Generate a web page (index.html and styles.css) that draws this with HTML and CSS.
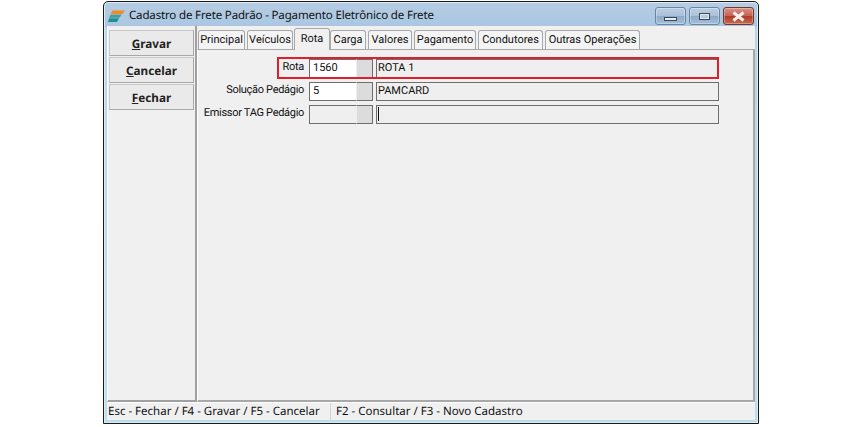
FILE: index.html
```html
<!DOCTYPE html>
<html lang="pt">
<head>
<meta charset="utf-8">
<title>Cadastro de Frete Padrão</title>
<link rel="stylesheet" href="styles.css">
</head>
<body>
<div class="window">
  <header class="titlebar">
    <svg class="logo" width="17" height="13" viewBox="0 0 17 13">
      <path d="M4.5 0.5H17L15 3.2Q14.5 4.2 13 4.2H2.5Z" fill="#f08a24"/>
      <path d="M2.5 4.8H13.5L11.5 7.8H1.2Z" fill="#3f9fa0"/>
      <path d="M1.2 8.3H11L9 12H0Z" fill="#1f8f96"/>
    </svg>
    <span class="title">Cadastro de Frete Padrão - Pagamento Eletrônico de Frete</span>
    <div class="controls">
      <span class="ctl ctl-min"><i></i></span>
      <span class="ctl ctl-max"><i></i></span>
      <span class="ctl ctl-close"><svg width="15" height="11" viewBox="0 0 15 11"><path d="M2.5 1.5L12.5 9.5M12.5 1.5L2.5 9.5" stroke="#f4f0ee" stroke-width="3"/></svg></span>
    </div>
  </header>
  <div class="client">
    <div class="main">
      <aside class="sidebar">
        <button class="btn"><u>G</u>ravar</button>
        <button class="btn"><u>C</u>ancelar</button>
        <button class="btn"><u>F</u>echar</button>
      </aside>
      <section class="tabarea">
        <nav class="tabs">
          <span class="tab tab-1">Principal</span>
          <span class="tab tab-2">Veículos</span>
          <span class="tab tab-3 active">Rota</span>
          <span class="tab tab-4">Carga</span>
          <span class="tab tab-5">Valores</span>
          <span class="tab tab-6">Pagamento</span>
          <span class="tab tab-7">Condutores</span>
          <span class="tab tab-8">Outras Operações</span>
        </nav>
        <div class="panel">
          <div class="row">
            <label class="lbl">Rota</label>
            <span class="code">1560</span><span class="lookup"></span>
            <span class="desc">ROTA 1</span>
          </div>
          <div class="row">
            <label class="lbl">Solução Pedágio</label>
            <span class="code">5</span><span class="lookup"></span>
            <span class="desc">PAMCARD</span>
          </div>
          <div class="row">
            <label class="lbl">Emissor TAG Pedágio</label>
            <span class="code code-off"></span><span class="lookup"></span>
            <span class="desc"><i class="caret"></i></span>
          </div>
          <div class="highlight"></div>
        </div>
      </section>
    </div>
    <footer class="status">
      <span class="st st-a">Esc - Fechar / F4 - Gravar / F5 - Cancelar</span>
      <span class="st">F2 - Consultar / F3 - Novo Cadastro</span>
    </footer>
  </div>
</div>
</body>
</html>
```
FILE: styles.css
```css
* { box-sizing: border-box; }
html, body { margin: 0; padding: 0; background: #fff; }
body {
  width: 862px;
  height: 427px;
  overflow: hidden;
  padding: 1px 0 0 103px;
  font-family: Roboto, "Noto Sans", sans-serif;
  font-size: 11px;
  color: #111;
  text-rendering: geometricPrecision;
}
.window {
  width: 656px;
  height: 423px;
  background: linear-gradient(#b6cde3 0, #a9c6e2 25px, #b8d4ea 26px, #bcdcf0 100%);
  border: 1px solid #1a1a1a;
  border-radius: 5px 5px 0 0;
  padding: 0 3px 3px;
  display: flex;
  flex-direction: column;
  box-shadow: inset 0 0 0 1px #dfeaf3;
}
.titlebar {
  height: 24px;
  flex: none;
  display: flex;
  align-items: center;
  padding-left: 1px;
}
.logo { flex: none; margin-right: 3px; margin-top: 4px; }
.title { font-family: "Noto Sans", sans-serif; font-size: 11.5px; letter-spacing: -.15px; color: #111; margin-left: 1px; margin-top: 3px; white-space: nowrap; }
.controls { margin-left: auto; margin-top: 4px; margin-right: 1px; display: flex; gap: 3px; }
.ctl {
  width: 31px;
  height: 18px;
  display: flex;
  align-items: center;
  justify-content: center;
  border: 1px solid #6d86a0;
  border-radius: 3px;
  background: linear-gradient(#bccfe2, #a9c0d8 50%, #8ea9c6 52%, #a5bfd9);
  box-shadow: inset 0 0 0 1px rgba(255,255,255,.3);
}
.ctl-close { border-color: #6b3a34; background: linear-gradient(#d89488, #c8604f 50%, #b13a2a 52%, #c86a50); }
.ctl-min i { width: 13px; height: 4px; margin-top: 6px; background: #e4ecf3; border: 1px solid #38495c; }
.ctl-max i { width: 11px; height: 7px; background: #b8c9da; border: 1px solid #38495c; box-shadow: inset 0 0 0 1px #e0e8f0; display: block; }
.client {
  flex: 1;
  background: #f0f0f0;
  display: flex;
  flex-direction: column;
}
.main { flex: 1; display: flex; min-height: 0; }
.sidebar {
  width: 90px;
  flex: none;
  border: 1px solid #a0a0a0;
  border-top: 0;
  border-left: 1px solid #fff;
  border-right-width: 2px;
  border-bottom-width: 2px;
  padding: 4px 0 0 1px;
  display: flex;
  flex-direction: column;
  gap: 1px;
}
.btn {
  width: 85px;
  height: 26px;
  padding: 1px 0 0;
  background: #eaeaea;
  border: 1px solid #a8a8a8;
  border-top-color: #c8c8c8;
  border-left-color: #c8c8c8;
  font-family: "Noto Sans", sans-serif;
  font-size: 11.7px;
  font-weight: 700;
  color: #222;
  text-rendering: geometricPrecision;
}
.tabarea { flex: 1; display: flex; flex-direction: column; min-width: 0; }
.tabs { height: 23px; flex: none; display: flex; align-items: flex-end; padding-left: 1px; position: relative; z-index: 1; }
.tab {
  height: 19px;
  border: 1px solid #a8a8a8;
  border-bottom: 0;
  border-radius: 3px 3px 0 0;
  background: #f4f4f4;
  line-height: 18px;
  text-align: center;
  white-space: nowrap;
  margin-right: 2px;
}
.tab-1 { width: 47px; }
.tab-2 { width: 46px; margin-right: 1px; }
.tab-3 { width: 36px; margin-right: 0; }
.tab-4 { width: 36px; }
.tab-5 { width: 44px; }
.tab-6 { width: 62px; }
.tab-7 { width: 65px; }
.tab-8 { width: 95px; }
.tab.active { height: 22px; background: #f0f0f0; line-height: 20px; margin-bottom: -1px; }
.panel {
  flex: 1;
  position: relative;
  border: 2px solid #a8a8a8;
  border-left: 1px solid #fff;
  border-top: 1px solid #a8a8a8;
  padding-top: 9px;
  display: flex;
  flex-direction: column;
  gap: 4px;
}
.row { height: 19px; display: flex; align-items: stretch; }
.lbl { width: 106px; text-align: right; line-height: 16px; white-space: nowrap; letter-spacing: -.3px; }
.code {
  width: 47px;
  margin-left: 5px;
  background: #fff;
  border: 1px solid #6e6e6e;
  border-right: 0;
  padding-left: 3px;
  line-height: 16px;
}
.code-off { background: #efefef; }
.lookup { width: 17px; background: #dcdcdc; border: 1px solid #6e6e6e; border-left-color: #eee; }
.desc {
  width: 343px;
  margin-left: 3px;
  background: #efefef;
  border: 1px solid #6e6e6e;
  padding-left: 1px;
  line-height: 16px;
}
.caret { display: block; width: 1px; height: 14px; margin-top: 1px; background: #111; }
.highlight {
  position: absolute;
  left: 79px;
  top: 7px;
  width: 442px;
  height: 22px;
  border: 2px solid #e01f2d;
}
.status {
  height: 18px;
  flex: none;
  display: flex;
  align-items: center;
  border-top: 1px solid #fff;
  font-family: "Noto Sans", sans-serif;
  font-size: 11.5px;
  white-space: nowrap;
}
.st { padding: 0 0 0 1px; line-height: 17px; }
.st-a { width: 224px; border-right: 1px solid #d4d4d4; }
.st + .st { padding-left: 5px; }
```
